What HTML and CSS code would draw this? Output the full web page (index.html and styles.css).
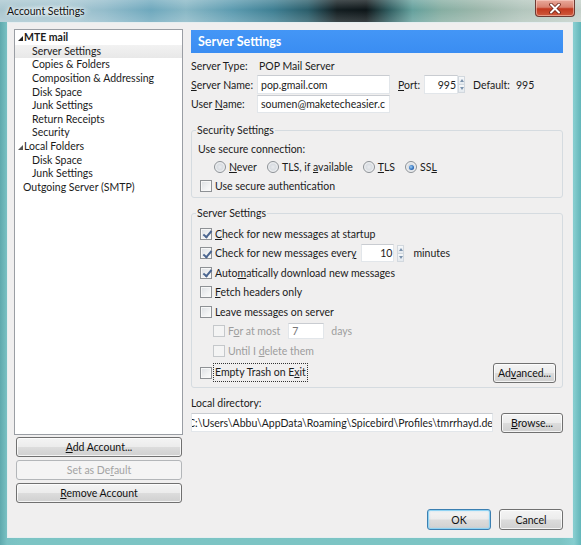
FILE: index.html
```html
<!DOCTYPE html>
<html lang="en">
<head>
<meta charset="utf-8">
<title>Account Settings</title>
<link rel="stylesheet" href="styles.css">
</head>
<body>
<div class="window">
  <div class="titlebar">
    <span class="title">Account Settings</span>
    <div class="close">
      <svg width="14" height="11" viewBox="0 0 14 11"><path d="M3 1.5 L11 9.5 M11 1.5 L3 9.5" stroke="#6a2418" stroke-width="3.6" stroke-linecap="round"/><path d="M3 1.5 L11 9.5 M11 1.5 L3 9.5" stroke="#ffffff" stroke-width="2" stroke-linecap="round"/></svg>
    </div>
  </div>
  <div class="client">
    <div class="leftcol">
      <div class="tree">
        <div class="node top bold"><span class="twisty"><svg width="5" height="5" viewBox="0 0 5 5"><path d="M5 0V5H0Z" fill="#222"/></svg></span>MTE mail</div>
        <div class="node sub selected">Server Settings</div>
        <div class="node sub">Copies &amp; Folders</div>
        <div class="node sub">Composition &amp; Addressing</div>
        <div class="node sub">Disk Space</div>
        <div class="node sub">Junk Settings</div>
        <div class="node sub">Return Receipts</div>
        <div class="node sub">Security</div>
        <div class="node top"><span class="twisty"><svg width="5" height="5" viewBox="0 0 5 5"><path d="M5 0V5H0Z" fill="#555"/></svg></span>Local Folders</div>
        <div class="node sub">Disk Space</div>
        <div class="node sub">Junk Settings</div>
        <div class="node leaf">Outgoing Server (SMTP)</div>
      </div>
      <div class="acct-buttons">
        <button class="btn acct"><u>A</u>dd Account...</button>
        <button class="btn acct" disabled>Set as De<u>f</u>ault</button>
        <button class="btn acct"><u>R</u>emove Account</button>
      </div>
    </div>
    <div class="rightcol">
      <div class="header">Server Settings</div>
      <div class="frow r-type"><span class="flabel">Server Type:</span><span class="fval">POP Mail Server</span></div>
      <div class="frow r-name">
        <span class="flabel"><u>S</u>erver Name:</span>
        <span class="textbox w-name">pop.gmail.com</span>
        <span class="plabel"><u>P</u>ort:</span>
        <span class="textbox w-port">995</span>
        <span class="spinner"><span class="sp-up"></span><span class="sp-down"></span></span>
        <span class="deflabel">Default:</span><span>995</span>
      </div>
      <div class="frow r-user"><span class="flabel">User <u>N</u>ame:</span><span class="textbox w-name">soumen@maketecheasier.c</span></div>

      <fieldset class="group g-sec">
        <legend>Security Settings</legend>
        <div class="grow s1">Use secure connection:</div>
        <div class="grow s2 radios">
          <span class="opt"><span class="radio"></span><span><u>N</u>ever</span></span>
          <span class="opt"><span class="radio"></span><span>TLS, if <u>a</u>vailable</span></span>
          <span class="opt"><span class="radio"></span><span><u>T</u>LS</span></span>
          <span class="opt"><span class="radio on"></span><span>SS<u>L</u></span></span>
        </div>
        <div class="grow s3 chkrow"><span class="check"></span><span>Use secure authent<u>i</u>cation</span></div>
      </fieldset>

      <fieldset class="group g-srv">
        <legend>Server Settings</legend>
        <div class="crow first"><span class="check on"></span><span><u>C</u>heck for new messages at startup</span></div>
        <div class="crow"><span class="check on"></span><span>Check for new messages ever<u>y</u></span><span class="textbox w-min">10</span><span class="spinner"><span class="sp-up"></span><span class="sp-down"></span></span><span class="minlabel">minutes</span></div>
        <div class="crow"><span class="check on"></span><span>Auto<u>m</u>atically download new messages</span></div>
        <div class="crow"><span class="check"></span><span><u>F</u>etch headers only</span></div>
        <div class="crow"><span class="check"></span><span>Leave messa<u>g</u>es on server</span></div>
        <div class="crow sub dis"><span class="check off"></span><span>F<u>o</u>r at most</span><span class="textbox w-days">7</span><span class="dayslabel">days</span></div>
        <div class="crow sub dis"><span class="check off"></span><span>Until I <u>d</u>elete them</span></div>
        <div class="crow last">
          <span class="focuswrap"><span class="check"></span><span class="focus">Empty Trash on E<u>x</u>it</span></span>
          <button class="btn adv">Ad<u>v</u>anced...</button>
        </div>
      </fieldset>

      <div class="dirlabel">Local directory:</div>
      <div class="dirrow">
        <span class="textbox w-dir"><span class="dirtext">C:\Users\Abbu\AppData\Roaming\Spicebird\Profiles\tmrrhayd.de</span></span>
        <button class="btn browse"><u>B</u>rowse...</button>
      </div>

      <div class="spacer"></div>
      <div class="okrow">
        <button class="btn ok default">OK</button>
        <button class="btn cancel">Cancel</button>
      </div>
    </div>
  </div>
</div>
</body>
</html>
```

FILE: styles.css
```css
* { box-sizing: border-box; }

html, body {
  margin: 0;
  padding: 0;
}

body {
  width: 581px;
  height: 545px;
  overflow: hidden;
  font-family: Lato, "Liberation Sans", "DejaVu Sans", sans-serif;
  font-size: 10.5px;
  color: #1b1b1b;
}

u { text-decoration: underline; text-underline-offset: 1px; }

.window {
  width: 581px;
  height: 545px;
  display: flex;
  flex-direction: column;
  background:
    linear-gradient(90deg, #5ea9ad 0, #79c1c3 7px, rgba(120,196,198,0) 20px),
    linear-gradient(270deg, #62b6b9 0, #86cdcf 7px, rgba(120,196,198,0) 20px),
    linear-gradient(180deg, #9cc3c9 0%, #78c0c2 60%, #7cc4c4 100%);
}

/* ---------- title bar ---------- */
.titlebar {
  height: 22px;
  position: relative;
  flex: none;
  background:
    linear-gradient(180deg, rgba(255,255,255,0.22) 0%, rgba(255,255,255,0) 45%, rgba(255,255,255,0.18) 100%),
    linear-gradient(90deg,
      #a9c6cf 0%, #a6c6d1 12%, #93bccb 18%, #6ea8bd 26%, #88b7c5 32%,
      #5c9bb0 40%, #3e7f93 47%, #2a5d6a 53%, #121d20 58%, #0d1518 63%,
      #2f5d60 67%, #64a09c 71%, #86aea2 76%, #9ab6aa 82%, #b3c6bd 90%, #c3d0c9 100%);
}

.title {
  position: absolute;
  left: 6px;
  top: 5px;
  font-size: 10.5px;
  color: #101010;
  text-shadow: 0 0 6px rgba(255,255,255,0.95), 0 0 3px rgba(255,255,255,0.9);
  background: radial-gradient(ellipse at center, rgba(225,238,242,0.75) 0%, rgba(225,238,242,0) 75%);
  padding: 0 6px 0 1px;
}

.close {
  position: absolute;
  left: 535px;
  top: 0;
  width: 40px;
  height: 17px;
  border: 1px solid #6e3a33;
  border-top: none;
  border-radius: 0 0 4px 4px;
  background: linear-gradient(180deg, #e9a99b 0%, #d9826f 45%, #c2391f 55%, #cf5a3d 100%);
  box-shadow: inset 0 0 0 1px rgba(255,220,210,0.5);
  display: flex;
  align-items: center;
  justify-content: center;
}

/* ---------- client ---------- */
.client {
  flex: 1;
  margin: 0 8px 7px 7px;
  background: #f0efef;
  border: 1px solid #e6eef0;
  padding: 6px 8px 7px 6px;
  display: flex;
  gap: 8px;
}

.leftcol {
  width: 169px;
  flex: none;
  display: flex;
  flex-direction: column;
}

.tree {
  height: 406px;
  background: #fff;
  border: 1px solid #9a9ea4;
  padding-top: 1px;
}

.node {
  height: 13.64px;
  line-height: 13.64px;
  white-space: nowrap;
  display: flex;
  align-items: center;
}

.node.top { padding-left: 3px; }
.node.sub { padding-left: 17px; }
.node.leaf { padding-left: 8px; }
.node.bold { font-weight: bold; }

.twisty {
  width: 6px;
  height: 13px;
  display: inline-flex;
  align-items: center;
  padding-top: 2px;
}

.node.selected {
  background: linear-gradient(180deg, #f2f2f2 0%, #e8e8e8 100%);
}

.acct-buttons {
  display: flex;
  flex-direction: column;
  gap: 3px;
  padding: 2px 1px 0 2px;
}

/* ---------- buttons ---------- */
.btn {
  font: inherit;
  color: #111;
  border: 1px solid #707070;
  border-radius: 3px;
  background: linear-gradient(180deg, #f4f4f4 0%, #ececec 48%, #dcdcdc 52%, #d0d0d0 100%);
  box-shadow: inset 0 0 0 1px rgba(255,255,255,0.75);
  padding: 0;
  height: 20px;
  line-height: 16px;
}

.btn:disabled {
  color: #a3a3a3;
  border-color: #b3b6b9;
  background: #f4f4f4;
  box-shadow: none;
}

.btn.acct { height: 20px; }

.btn.default {
  border-color: #3c7fb1;
  box-shadow: inset 0 0 0 1px #8fd3f3, inset 0 0 2px 1px rgba(140,210,245,0.5);
}

/* ---------- right column ---------- */
.rightcol {
  flex: 1;
  display: flex;
  flex-direction: column;
  min-width: 0;
}

.header {
  margin-top: 1px;
  height: 23px;
  margin-right: 1px;
  background: linear-gradient(180deg, #4496f6 0%, #3a8df2 100%);
  color: #fff;
  font-weight: bold;
  font-size: 12.5px;
  line-height: 23px;
  padding-left: 7px;
}

.frow {
  display: flex;
  align-items: center;
  white-space: nowrap;
}

.r-type { height: 16px; margin-top: 5px; }
.r-name { height: 19px; margin-top: 1px; }
.r-user { height: 19px; }

.flabel { width: 66px; flex: none; }
.fval { padding-left: 2px; }

.textbox {
  display: inline-flex;
  align-items: center;
  background: #fff;
  border: 1px solid #e2e6ea;
  border-top-color: #c9ccd1;
  height: 19px;
  padding: 0 3px;
  overflow: hidden;
  white-space: nowrap;
  flex: none;
}

.w-name { width: 133px; }
.r-user .w-name { height: 18px; }

.plabel { margin-left: 8px; width: 26px; }
.w-port { width: 34px; justify-content: flex-end; padding-right: 1px; }
.deflabel { margin-left: 8px; width: 43px; }

.spinner {
  width: 7px;
  height: 17px;
  display: inline-flex;
  flex-direction: column;
  flex: none;
}
.sp-up, .sp-down {
  flex: 1;
  position: relative;
  background: linear-gradient(180deg, #f6f8fa, #e4e9ee);
  border: 1px solid #d2d8de;
}
.sp-down { border-top: none; }
.sp-up::after, .sp-down::after {
  content: "";
  position: absolute;
  left: 1px;
  top: 2px;
  border-left: 2px solid transparent;
  border-right: 2px solid transparent;
}
.sp-up::after { border-bottom: 3px solid #7c93ad; }
.sp-down::after { top: 2px; border-top: 3px solid #7c93ad; }

/* ---------- group boxes ---------- */
.group {
  margin: 0 1px 0 0;
  border: 1px solid #d5dbe0;
  border-radius: 3px;
  padding: 0 6px 0 6px;
  min-width: 0;
}

.group legend {
  padding: 0 1px;
  margin-left: -2px;
  line-height: 14px;
  height: 14px;
}

.g-sec { margin-top: 10px; padding-bottom: 2px; }
.g-srv { margin-top: 8px; padding-bottom: 2px; }

.grow {
  display: flex;
  align-items: center;
  white-space: nowrap;
}
.s1 { height: 18px; margin-top: 3px; }
.s2 { height: 18px; }
.s3 { height: 19px; }

.radios { padding-left: 16px; gap: 10px; }
.opt { display: inline-flex; align-items: center; gap: 3px; }

.chkrow { padding-left: 2px; gap: 3px; }

.radio {
  width: 12px;
  height: 12px;
  border-radius: 50%;
  border: 1px solid #8c9196;
  background: radial-gradient(circle at 50% 50%, #e9ebee 0%, #d9dde2 40%, #f4f5f6 75%, #ffffff 100%);
  flex: none;
  position: relative;
}
.radio.on::after {
  content: "";
  position: absolute;
  left: 2.5px;
  top: 2.5px;
  width: 5px;
  height: 5px;
  border-radius: 50%;
  background: radial-gradient(circle at 40% 40%, #9fd0f5 0%, #3373c0 55%, #1d3e7a 100%);
}

.check {
  width: 12px;
  height: 12px;
  border: 1px solid #8e9195;
  background: linear-gradient(135deg, #dcdfe3 0%, #f1f2f3 60%, #fbfbfb 100%);
  box-shadow: inset 0 0 0 1px #f7f7f7;
  flex: none;
  position: relative;
}
.check.on::after {
  content: "";
  position: absolute;
  left: 3.5px;
  top: 0.5px;
  width: 3px;
  height: 7px;
  border-right: 2px solid #4c6690;
  border-bottom: 2px solid #4c6690;
  transform: rotate(40deg);
}
.check.off {
  border-color: #c5c8cb;
  background: #f4f4f4;
  box-shadow: none;
}

.crow {
  display: flex;
  align-items: center;
  white-space: nowrap;
  height: 19.5px;
  padding-left: 2px;
  gap: 3px;
}
.crow.first { margin-top: 4px; }
.crow.sub { padding-left: 15px; }
.crow.dis { color: #9d9d9d; }
.crow.last {
  height: 24px;
  justify-content: space-between;
  padding-right: 0;
}

.w-min { width: 33px; height: 18px; justify-content: flex-end; padding-right: 1px; margin-left: 2px; }
.minlabel { margin-left: 6px; }

.w-days { width: 36px; height: 16px; margin-left: 5px; color: #777; }
.dayslabel { margin-left: 4px; }

.focuswrap { display: inline-flex; align-items: center; gap: 1px; }
.focus {
  border: 1px dotted #333;
  padding: 2px 1px 3px 1px;
}

.btn.adv { width: 63px; height: 20px; }

.dirlabel {
  margin-top: 8px;
  height: 14px;
  line-height: 14px;
}

.dirrow {
  margin-top: 3px;
  display: flex;
  align-items: center;
  gap: 8px;
  padding-right: 1px;
}

.w-dir {
  width: 302px;
  height: 19px;
  padding: 0;
}
.dirtext { margin-left: -4px; }

.btn.browse { width: 63px; height: 20px; }

.spacer { flex: 1; }

.okrow {
  display: flex;
  justify-content: flex-end;
  gap: 8px;
  padding-right: 1px;
}
.btn.ok { width: 64px; height: 21px; }
.btn.cancel { width: 64px; height: 21px; }
```
